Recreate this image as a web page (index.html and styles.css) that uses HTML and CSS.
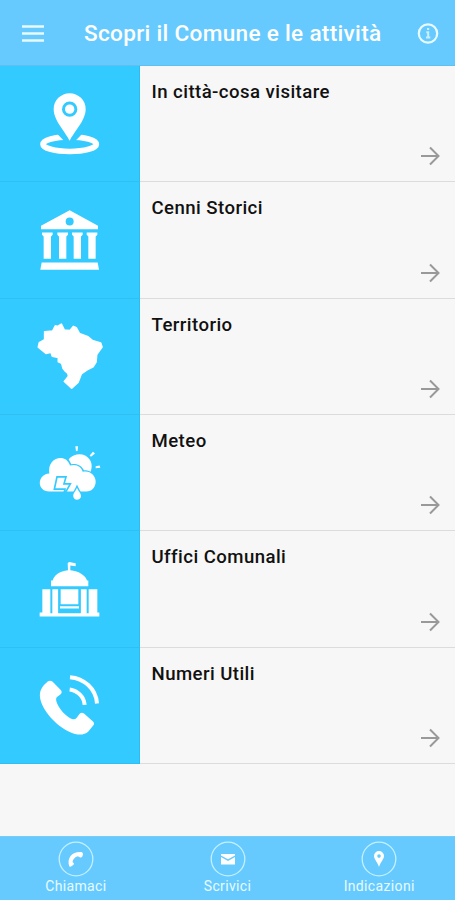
FILE: index.html
```html
<!DOCTYPE html>
<html lang="it">

<head>
    <meta charset="UTF-8">
    <meta name="viewport" content="width=device-width, initial-scale=1.0">
    <title>Scopri il Comune e le attività</title>
    <link rel="stylesheet" href="styles.css">
</head>

<body>
    <header class="top-bar">
        <svg class="menu-icon" viewBox="0 0 24 20">
            <path d="M1 2.5h22M1 9.5h22M1 16.5h22" />
        </svg>
        <h1>Scopri il Comune e le attività</h1>
        <svg class="info-icon" viewBox="0 0 24 24">
            <circle cx="12" cy="11.5" r="9.2" />
            <path class="letter" d="M10.3 10.3h1.9v5M10 15.5h4.3M11 7h2.2" />
        </svg>
    </header>

    <main class="list">
        <!-- In città -->
        <a class="row">
            <div class="tile">
                <svg viewBox="-2 -4.5 270 270">
                    <ellipse class="line" cx="135" cy="191" rx="80" ry="22" />
                    <path class="gap" d="M104 158L135 190L166 158Z" />
                    <path fill-rule="evenodd" d="M135 181C126 158 87 121 87 86a48 48 0 0 1 96 0C183 121 144 158 135 181ZM135 63a23 23 0 1 0 0 46a23 23 0 1 0 0-46Z" />
                    <circle cx="135" cy="86" r="14" />
                </svg>
            </div>
            <div class="content">
                <h2>In città-cosa visitare</h2>
                <svg class="arrow" viewBox="0 0 20 20"><path d="M1 10h17M10 1.5l8.5 8.5l-8.5 8.5" /></svg>
            </div>
        </a>

        <!-- Cenni Storici -->
        <a class="row">
            <div class="tile">
                <svg viewBox="-2 -0.5 270 270">
                    <path fill-rule="evenodd" d="M135 45L220 92V102H49V92ZM135 67a12 12 0 1 0 0 24a12 12 0 1 0 0-24Z" />
                    <path d="M52 112h32v7l-5 5v67H57v-67l-5-5ZM98 112h32v7l-5 5v67h-22v-67l-5-5ZM142 112h32v7l-5 5v67h-22v-67l-5-5ZM186 112h32v7l-5 5v67h-22v-67l-5-5Z" />
                    <path d="M51 202H219L223 224H47Z" />
                </svg>
            </div>
            <div class="content">
                <h2>Cenni Storici</h2>
                <svg class="arrow" viewBox="0 0 20 20"><path d="M1 10h17M10 1.5l8.5 8.5l-8.5 8.5" /></svg>
            </div>
        </a>

        <!-- Territorio -->
        <a class="row">
            <div class="tile">
                <svg viewBox="-2 3.6 270 270">
                    <path class="soft" d="M60 66L84 64L92 48L99 50L110 43L119 61L136 62L146 50L155 54L164 71L190 81L203 92L228 100L232 112L216 134L214 157L205 171L186 181L170 192L160 218L141 235L119 215L132 199L129 190L121 183L115 175L111 160L101 156V143L83 139L79 127L64 131L41 112L44 99L60 90Z" />
                </svg>
            </div>
            <div class="content">
                <h2>Territorio</h2>
                <svg class="arrow" viewBox="0 0 20 20"><path d="M1 10h17M10 1.5l8.5 8.5l-8.5 8.5" /></svg>
            </div>
        </a>

        <!-- Meteo -->
        <a class="row">
            <div class="tile">
                <svg viewBox="-2 -7.6 270 270">
                    <path d="M152 47l8 0l-1 14l-5 1ZM205 64l6 5l-12 10l-4-4ZM213 107l12-2l2 7l-14 1Z" />
                    <path d="M132 86C150 66 181 66 195 87C203 99 202 112 198 124C192 119 184 119 178 119C171 106 158 98 140 101Z" />
                    <path d="M74 183C36 183 36 132 74 129C66 79 125 67 136 105C155 99 171 109 174 124C194 118 213 134 213 153C213 171 201 183 185 183Z" />
                    <path class="bolt" d="M97 139H124L118 160H137L115 199L121 176H89Z" />
                    <path class="drop" d="M157 172C152 184 144 189 146 199C149 212 166 210 169 199C170 189 162 184 157 172Z" />
                </svg>
            </div>
            <div class="content">
                <h2>Meteo</h2>
                <svg class="arrow" viewBox="0 0 20 20"><path d="M1 10h17M10 1.5l8.5 8.5l-8.5 8.5" /></svg>
            </div>
        </a>

        <!-- Uffici Comunali -->
        <a class="row">
            <div class="tile">
                <svg viewBox="-2 -3.5 270 270">
                    <path d="M129 54Q134 48 141 52L153 54V63L137 61V75C163 77 184 92 187 106H191V123H79V106H84C87 91 105 77 130 75Z" />
                    <path d="M53 132H77V204H83V132H101V204H168V132H186V204H192V132H218V202H224V214H45V202H53Z" />
                    <path class="cut" d="M101 132H168V203H101Z" />
                    <path d="M108 132H161V177H108ZM106 183H163V190H106Z" />
                </svg>
            </div>
            <div class="content">
                <h2>Uffici Comunali</h2>
                <svg class="arrow" viewBox="0 0 20 20"><path d="M1 10h17M10 1.5l8.5 8.5l-8.5 8.5" /></svg>
            </div>
        </a>

        <!-- Numeri Utili -->
        <a class="row">
            <div class="tile">
                <svg viewBox="-2 0.5 270 270">
                    <path d="M70 64Q78 60 84 66L109 91Q114 98 107 104L96 112Q93 116 95 124C101 145 125 172 144 178Q151 180 156 174L165 162Q171 156 178 161L205 185Q211 191 205 198L191 215C178 228 155 226 137 217C94 198 51 150 46 112C44 94 51 79 70 64Z" />
                    <path class="wave" d="M136 52C177 55 214 86 217 131M135 89C158 92 178 110 180 135" />
                </svg>
            </div>
            <div class="content">
                <h2>Numeri Utili</h2>
                <svg class="arrow" viewBox="0 0 20 20"><path d="M1 10h17M10 1.5l8.5 8.5l-8.5 8.5" /></svg>
            </div>
        </a>
    </main>

    <footer class="bottom-bar">
        <a class="action">
            <svg viewBox="0 0 36 36">
                <circle class="ring" cx="18" cy="18" r="16.8" />
                <path d="M11.2 25.3C8.5 16.5 14.5 10.2 23.5 11Q25.3 11.5 25 13.5L24.3 15.5Q23.5 17 21.8 16.3L19.8 15.2C16.8 16 15 18.3 14.5 21L15.8 22.3Q16.2 23.3 15.2 24L13 25.4Q11.8 26 11.2 25.3Z" />
            </svg>
            <span>Chiamaci</span>
        </a>
        <a class="action">
            <svg viewBox="0 0 36 36">
                <circle class="ring" cx="18" cy="18" r="16.8" />
                <path d="M11 13h14v1.5l-7 3.8l-7-3.8ZM11 16l7 4l7-4v7.5H11Z" />
            </svg>
            <span>Scrivici</span>
        </a>
        <a class="action">
            <svg viewBox="0 0 36 36">
                <circle class="ring" cx="18" cy="18" r="16.8" />
                <path fill-rule="evenodd" d="M18 26C17 21.5 13 18.5 13 15a5 5 0 0 1 10 0C23 18.5 19 21.5 18 26ZM18 13.3a1.8 1.8 0 1 0 0 3.6a1.8 1.8 0 1 0 0-3.6Z" />
            </svg>
            <span>Indicazioni</span>
        </a>
    </footer>
</body>

</html>
```
FILE: styles.css
```css
* {
    box-sizing: border-box;
}

body {
    margin: 0;
    height: 100vh;
    display: flex;
    flex-direction: column;
    font-family: Roboto, "Liberation Sans", sans-serif;
    background-color: #f7f7f7;
}

.top-bar {
    height: 66px;
    flex-shrink: 0;
    display: flex;
    align-items: center;
    padding: 3px 15px 0 21px;
    background-color: #66caff;
    border-bottom: 1px solid #5fbff0;
}

.top-bar h1 {
    flex: 1;
    margin: 0 0 0 39px;
    font-size: 22.6px;
    font-weight: 500;
    letter-spacing: 0.3px;
    line-height: 30px;
    white-space: nowrap;
    color: #fff;
}

.menu-icon,
.info-icon {
    width: 24px;
    height: 20px;
    fill: none;
    stroke: #e8faff;
    stroke-width: 2.4;
}

.info-icon {
    height: 24px;
    stroke-width: 2.2;
}

.info-icon .letter {
    stroke: #c9f0ff;
    stroke-width: 2;
}

.list {
    flex: 1;
}

.row {
    display: flex;
    height: 116.33px;
}

.tile {
    width: 139.5px;
    display: flex;
    align-items: center;
    justify-content: center;
    background-color: #33caff;
    border-right: 1px solid #2bbdf0;
    border-bottom: 1px solid #2fbff2;
}

.tile svg {
    width: 90px;
    height: 90px;
    fill: #fff;
}

.tile .line {
    fill: none;
    stroke: #fff;
    stroke-width: 17;
}

.tile .gap {
    stroke: #33caff;
    stroke-width: 12;
    fill: #33caff;
}

.tile .soft {
    stroke: #fff;
    stroke-width: 5;
    stroke-linejoin: round;
}

.tile .cut {
    fill: #33caff;
}

.tile .bolt {
    stroke: #33caff;
    stroke-width: 5;
}

.tile .drop {
    stroke: #33caff;
    stroke-width: 8;
    paint-order: stroke;
}

.tile .wave {
    fill: none;
    stroke: #fff;
    stroke-width: 12;
}

.content {
    flex: 1;
    display: flex;
    flex-direction: column;
    justify-content: space-between;
    padding: 14px 15px 15px 12px;
    border-bottom: 1px solid #dcdcdc;
}

.content h2 {
    margin: 0;
    font-size: 18.6px;
    font-weight: 500;
    letter-spacing: 0.44px;
    line-height: 24px;
    color: #111;
}

.arrow {
    align-self: flex-end;
    width: 20px;
    height: 20px;
    fill: none;
    stroke: #999;
    stroke-width: 2;
}

.bottom-bar {
    height: 64px;
    flex-shrink: 0;
    display: flex;
    background-color: #66caff;
    border-top: 1px solid #78ccf5;
}

.action {
    flex: 1;
    display: flex;
    flex-direction: column;
    align-items: center;
    padding-top: 4px;
    font-size: 14px;
    letter-spacing: 0.35px;
    line-height: 18px;
    color: #e8faff;
}

.action svg {
    width: 36px;
    height: 36px;
    fill: #fff;
}

.action .ring {
    fill: none;
    stroke: #c4f0ff;
    stroke-width: 1.3;
}
```
